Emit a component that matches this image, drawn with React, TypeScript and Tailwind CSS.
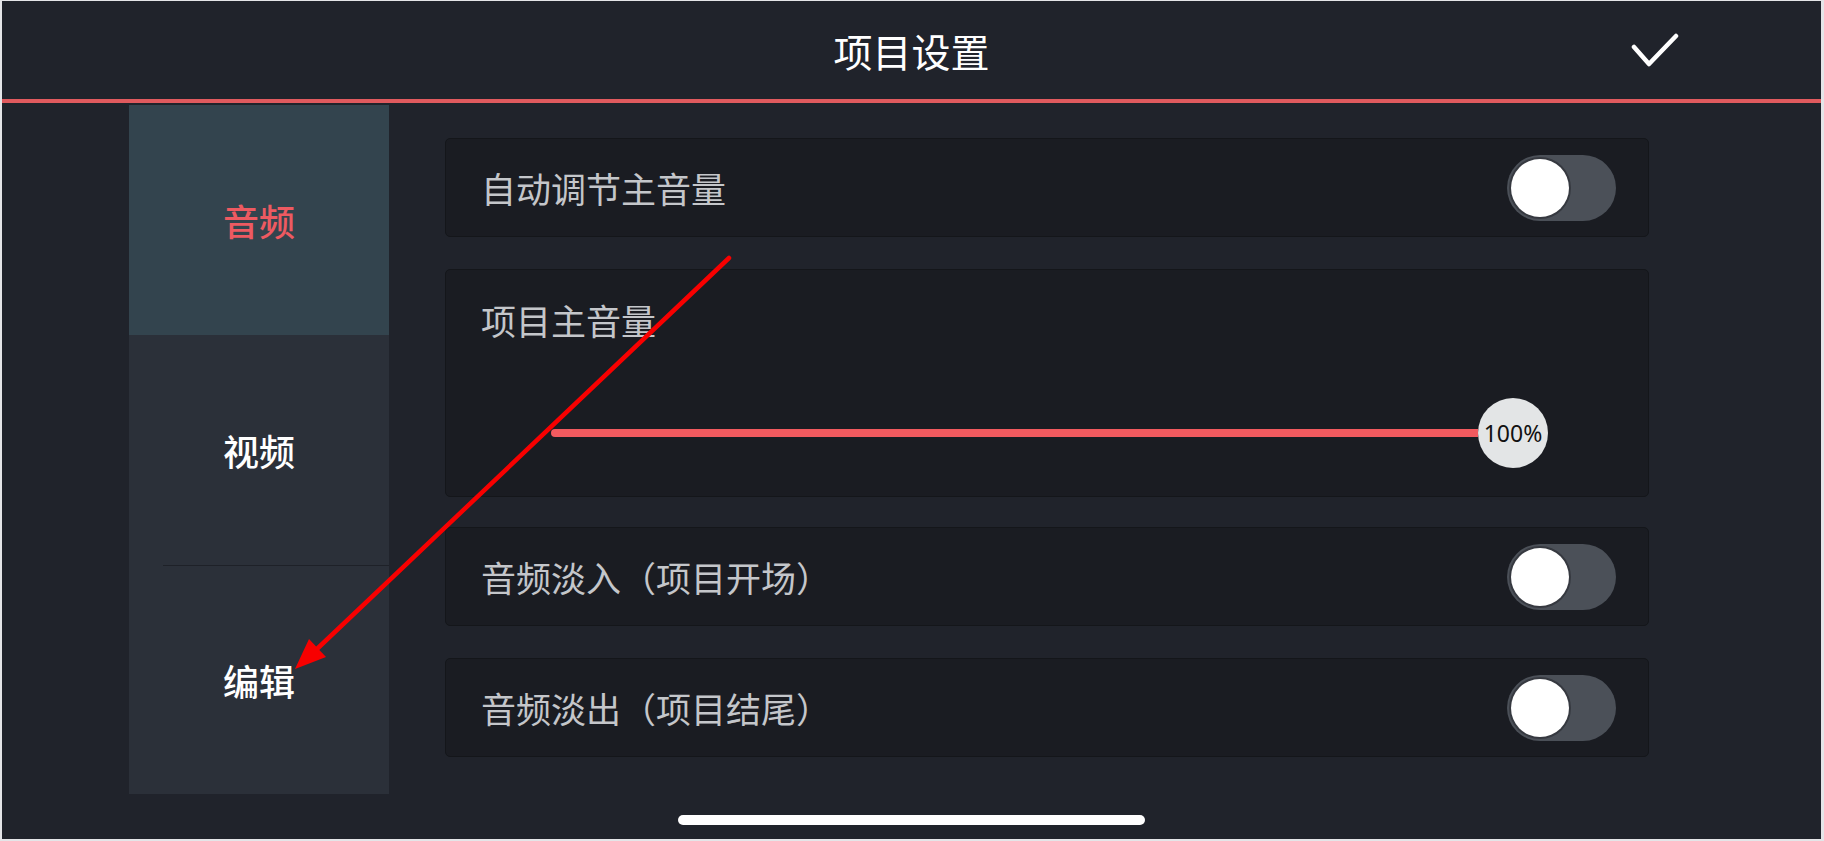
import React from "react"

function Toggle() {
  return (
    <div className="w-[109px] h-[66px] rounded-full bg-[#4b5058] flex items-center pl-[4px]">
      <div className="w-[58px] h-[58px] rounded-full bg-white shadow-[0_0_0_2px_rgba(40,42,48,0.6)]" />
    </div>
  )
}

function SwitchCard({ label, className = "" }: { label: string; className?: string }) {
  return (
    <div className={"h-[99px] flex items-center justify-between pl-[35px] pr-[32px] rounded-[5px] border border-[#14161a] bg-[#1a1c22] " + className}>
      <span className="text-[35px] leading-none text-[#c4c6ca]">{label}</span>
      <Toggle />
    </div>
  )
}

export default function App() {
  return (
    <div className="relative w-[1824px] h-[841px] overflow-hidden bg-[#20232b] border-t border-l-[2px] border-r-[3px] border-b-[2px] border-[#e4e5e8] font-['Noto_Sans_CJK_SC',sans-serif]">
      {/* header */}
      <div className="h-[98px] grid grid-cols-[1fr_auto_1fr] items-center">
        <div />
        <h1 className="text-[39px] leading-none font-normal text-white">项目设置</h1>
        <div className="flex justify-end pr-[142px]">
          <svg width="48" height="34" viewBox="0 0 48 34" fill="none">
            <path d="M3 14 L18 31 L45 3" stroke="white" strokeWidth="4.5" strokeLinecap="round" strokeLinejoin="round" />
          </svg>
        </div>
      </div>
      <div className="h-[4px] bg-[#e05a5e]" />

      {/* body */}
      <div className="flex pl-[127px] pt-[2px]">
        <div className="w-[260px] flex flex-col">
          <div className="h-[230px] bg-[#33444e] flex items-center justify-center">
            <span className="text-[36px] leading-none font-medium text-[#ee5a61]">音频</span>
          </div>
          <div className="h-[230px] bg-[#2b3039] flex items-center justify-center">
            <span className="text-[36px] leading-none font-medium text-white">视频</span>
          </div>
          <div className="h-px bg-[#2b3039]">
            <div className="ml-[34px] h-px bg-[#1e2128]" />
          </div>
          <div className="h-[228px] bg-[#2b3039] flex items-center justify-center">
            <span className="text-[36px] leading-none font-medium text-white">编辑</span>
          </div>
        </div>

        <div className="ml-[56px] w-[1204px] pt-[33px] flex flex-col">
          <SwitchCard label="自动调节主音量" />

          <div className="mt-[32px] h-[228px] rounded-[5px] border border-[#14161a] bg-[#1a1c22]">
            <div className="pl-[35px] pt-[32px] text-[35px] leading-none text-[#c4c6ca]">项目主音量</div>
            <div className="mt-[61px] h-[70px] flex items-center pl-[105px] pr-[100px]">
              <div className="flex-1 h-[8px] rounded-l-full bg-[#f25a5f]" />
              <div className="w-[70px] h-[70px] rounded-full bg-[#e3e5e6] flex items-center justify-center">
                <span className="text-[23px] leading-none text-[#111] font-['Noto_Sans',sans-serif]">100%</span>
              </div>
            </div>
          </div>

          <SwitchCard label="音频淡入（项目开场）" className="mt-[30px]" />
          <SwitchCard label="音频淡出（项目结尾）" className="mt-[32px]" />
        </div>
      </div>

      {/* home indicator */}
      <div className="mt-[21px] flex justify-center">
        <div className="w-[467px] h-[10px] rounded-full bg-white" />
      </div>

      {/* annotation arrow */}
      <svg className="absolute -left-[2px] -top-[1px] pointer-events-none" width="1824" height="841" viewBox="0 0 1824 841">
        <line x1="729" y1="258" x2="318" y2="648" stroke="#f80000" strokeWidth="4.5" strokeLinecap="round" />
        <polygon points="295,669 326,657 309,639" fill="#f80000" />
      </svg>
    </div>
  )
}
